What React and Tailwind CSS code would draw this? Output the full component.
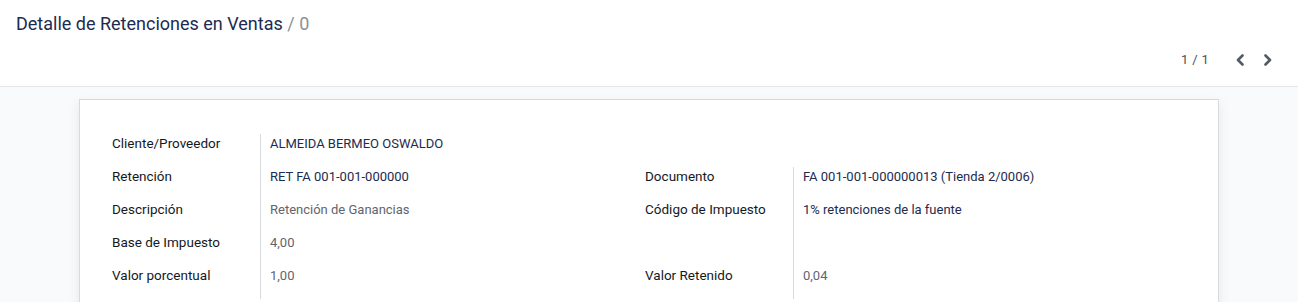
import React from "react";

const font = { fontFamily: "Roboto, 'Noto Sans', sans-serif" };

function Chevron({ dir }) {
  return (
    <svg width="10" height="12" viewBox="0 0 10 12" className="block">
      {dir === "left" ? (
        <path d="M7.5 1.5 L3 6 L7.5 10.5" fill="none" stroke="#555b63" strokeWidth="2.6" strokeLinecap="round" strokeLinejoin="round" />
      ) : (
        <path d="M2.5 1.5 L7 6 L2.5 10.5" fill="none" stroke="#555b63" strokeWidth="2.6" strokeLinecap="round" strokeLinejoin="round" />
      )}
    </svg>
  );
}

function Cell({ label, value, kind, sep = true }) {
  return (
    <div className="flex h-[33px]">
      <div className={`w-[149px] shrink-0 text-[13.5px] leading-[18px] font-normal text-[#15191e] ${sep ? "border-r border-[#d8dadd]" : ""}`}>
        {label}
      </div>
      <div className={`pl-[9px] text-[13px] leading-[20px] ${kind === "link" ? "text-[#1c2b50]" : "text-[#5f656d]"}`}>
        {value}
      </div>
    </div>
  );
}

export default function App() {
  const left = [
    ["Cliente/Proveedor", "ALMEIDA BERMEO OSWALDO", "link"],
    ["Retención", "RET FA 001-001-000000", "link"],
    ["Descripción", "Retención de Ganancias", "text"],
    ["Base de Impuesto", "4,00", "text"],
    ["Valor porcentual", "1,00", "text"],
  ];
  const right = [
    null,
    ["Documento", "FA 001-001-000000013 (Tienda 2/0006)", "link"],
    ["Código de Impuesto", "1% retenciones de la fuente", "link"],
    ["", "", "text"],
    ["Valor Retenido", "0,04", "text"],
  ];
  return (
    <div className="min-h-[302px] bg-[#f9fafb]" style={font}>
      <div className="h-[87px] bg-white border-b border-[#e4e6e9] px-4 pt-3">
        <div className="text-[18px] leading-[24px] text-[#1c2b50]">
          Detalle de Retenciones en Ventas <span className="text-[#8b9097]">/ 0</span>
        </div>
        <div className="flex justify-end items-center mt-[16px] h-[16px]">
          <span className="text-[13px] text-[#4b5057] mr-[26px] tracking-[0.3px]">1 / 1</span>
          <div className="flex items-center gap-[18px] mr-[9px]">
            <Chevron dir="left" />
            <Chevron dir="right" />
          </div>
        </div>
      </div>
      <div className="pt-3">
        <div className="w-[1140px] mx-auto bg-white border border-[#d8dadd] shadow-[0_4px_12px_rgba(0,0,0,0.08)] px-8 pt-[34px] pb-6">
          <div className="grid grid-cols-[533px_1fr]">
            <div>
              {left.map((r, i) => (
                <Cell key={i} label={r[0]} value={r[1]} kind={r[2]} />
              ))}
            </div>
            <div>
              {right.map((r, i) =>
                r ? (
                  <Cell key={i} label={r[0]} value={r[1]} kind={r[2]} />
                ) : (
                  <div key={i} className="h-[33px]" />
                )
              )}
            </div>
          </div>
        </div>
      </div>
    </div>
  );
}
